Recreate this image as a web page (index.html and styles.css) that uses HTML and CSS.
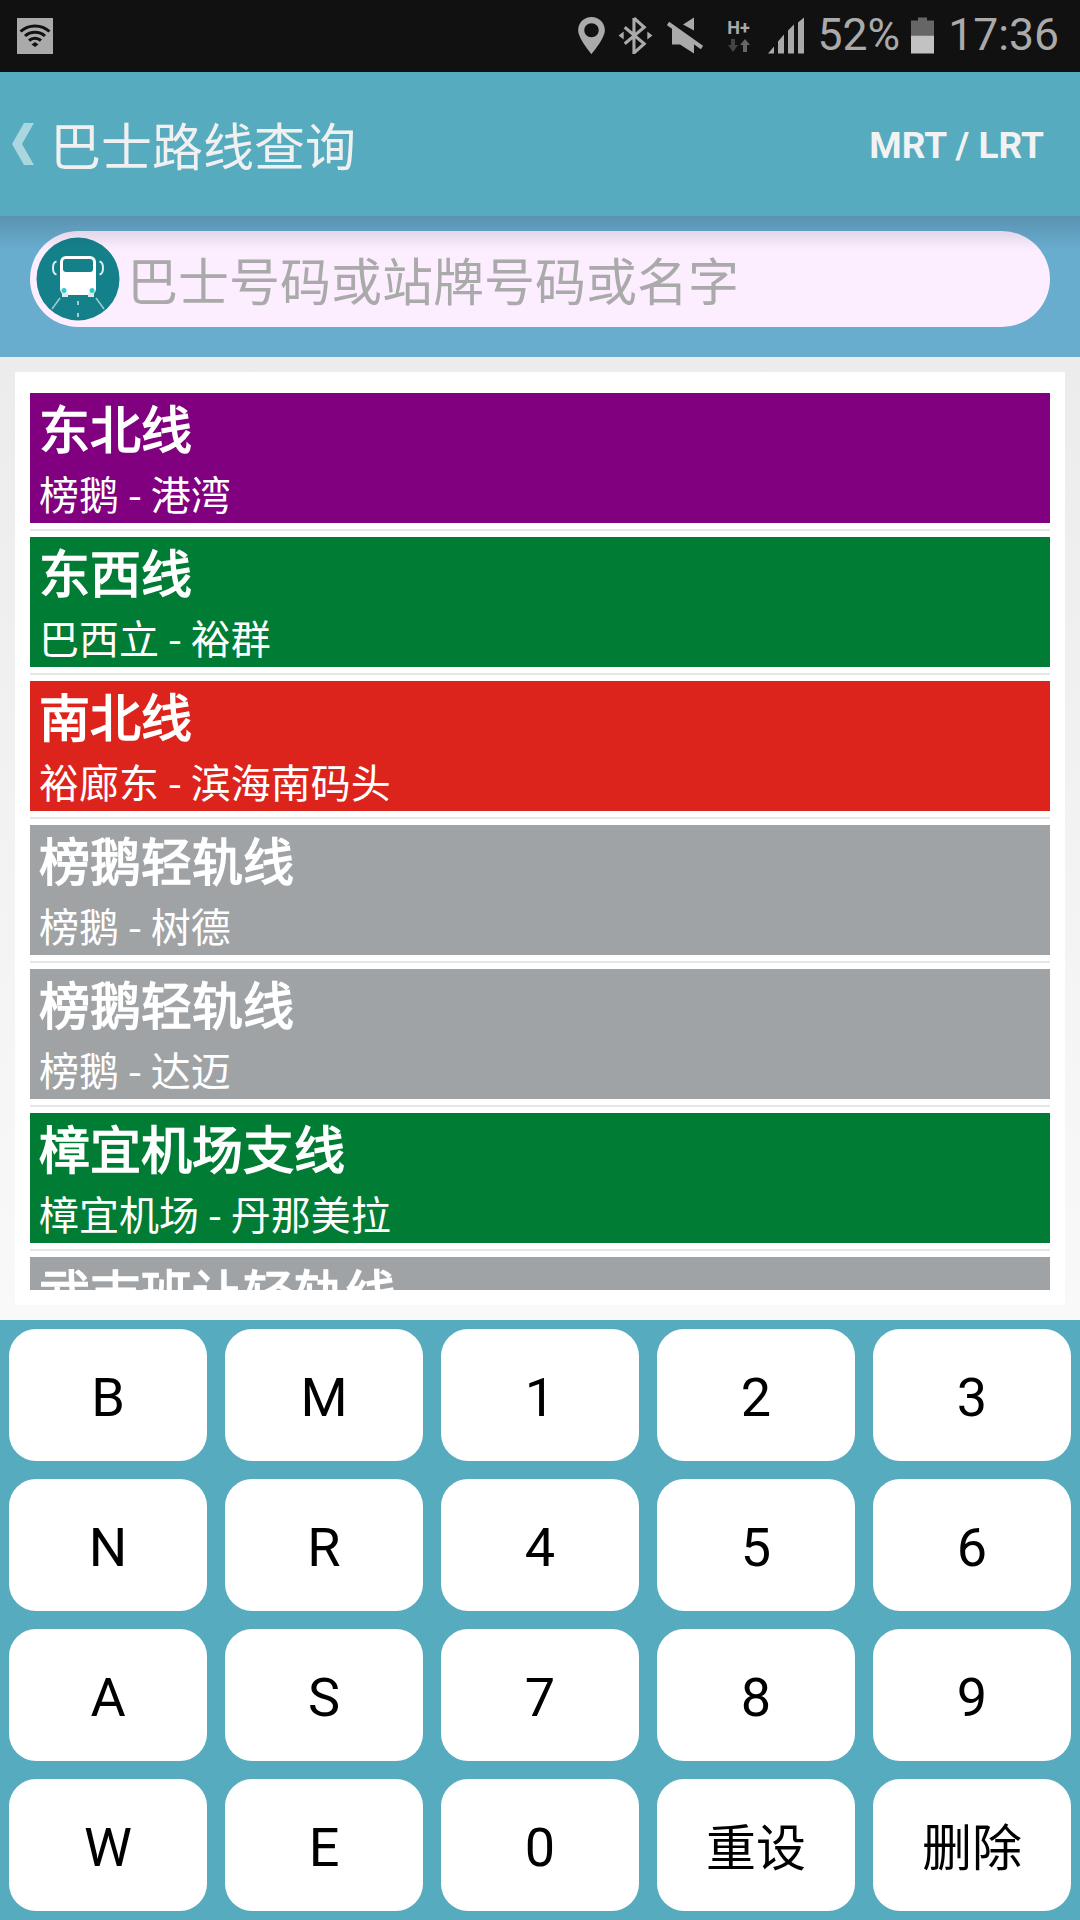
FILE: index.html
```html
<!DOCTYPE html>
<html lang="zh">
<head>
<meta charset="utf-8">
<title>巴士路线查询</title>
<link rel="stylesheet" href="styles.css">
</head>
<body>
<div class="app">
  <div class="status">
    <div class="wifi-box">
      <svg width="36" height="36" viewBox="0 0 35 36"><path d="M3 13.500C11 6 24 6 32 13.500" fill="none" stroke="#111" stroke-width="3"/><path d="M7.500 18C13 13 22 13 27.500 18" fill="none" stroke="#111" stroke-width="3"/><path d="M11.500 22.500C15 19.500 20 19.500 23.500 22.500" fill="none" stroke="#111" stroke-width="3"/><path d="M14 26.500L17.500 24L21 26.500L17.500 29Z" fill="#111"/></svg>
    </div>
    <div class="status-right">
      <svg class="st-loc" width="27" height="37" viewBox="0 0 26 36"><path fill-rule="evenodd" d="M13 0C5.800 0 0 5.700 0 12.800C0 21 13 36 13 36S26 21 26 12.800C26 5.700 20.200 0 13 0ZM13 6C17 6 20 9 20 12.800S17 19.600 13 19.600S6 16.600 6 12.800S9 6 13 6Z" fill="#aaa"/></svg>
      <svg class="st-bt" width="35" height="37" viewBox="0 0 33 36"><path d="M15 1V35L25 26L6 10M15 1L25 10L6 26" fill="none" stroke="#aaa" stroke-width="3"/><path d="M0 18L5 14V22Z M33 18L28 14V22Z" fill="#aaa"/></svg>
      <svg class="st-mute" width="36" height="37" viewBox="0 0 36 36"><path d="M27 0V13L16 7ZM5 10L27 26V36L13 27H5Z" fill="#aaa"/><path d="M1 6L35 30" stroke="#aaa" stroke-width="4"/></svg>
      <div class="st-net">
        <span class="st-hplus">H+</span>
        <svg width="22" height="14" viewBox="0 0 22 14"><path d="M3 0H7V6H10L5 13L0 6H3Z" fill="#444"/><path d="M15 13H19V6H22L17 0L12 6H15Z" fill="#666"/></svg>
      </div>
      <svg class="st-signal" width="36" height="37" viewBox="0 0 36 36"><path d="M0 36L6 29V36ZM10 36V24L16 17V36ZM20 36V13L26 7V36ZM30 36V5L36 0V36Z" fill="#aaa"/></svg>
      <span class="st-pct">52%</span>
      <svg class="st-bat" width="23" height="37" viewBox="0 0 23 36"><path d="M7 0H16V3H23V18H0V3H7Z" fill="#666"/><rect y="18" width="23" height="18" fill="#c2c2c2"/></svg>
      <span class="st-time">17:36</span>
    </div>
  </div>

  <header class="head">
    <div class="head-left">
      <svg class="back" width="22" height="42" viewBox="0 0 22 42"><path d="M12 0H22L10 21L22 42H12L0 21Z" fill="#a9d6df"/></svg>
      <span class="head-title">巴士路线查询</span>
    </div>
    <span class="head-action">MRT / LRT</span>
  </header>

  <div class="search-band">
    <div class="pill">
      <svg class="bus" width="84" height="84" viewBox="0 0 84 84">
        <circle cx="42" cy="42" r="41.500" fill="#14808a"/>
        <path d="M20.500 24.500C17.500 25 17 27 17 31S17.500 37 20.500 37.500M63.500 24.500C66.500 25 67 27 67 31S66.500 37 63.500 37.500" fill="none" stroke="#d8eef0" stroke-width="2"/>
        <rect x="24" y="19" width="36" height="39" rx="6" fill="#fff"/>
        <rect x="27" y="22" width="30" height="13" rx="3" fill="#14808a"/>
        <rect x="26" y="56" width="6" height="4" fill="#d8eef0"/>
        <rect x="52" y="56" width="6" height="4" fill="#d8eef0"/>
        <circle cx="28" cy="53.500" r="2.500" fill="#35c6d0"/>
        <circle cx="56" cy="53.500" r="2.500" fill="#35c6d0"/>
        <path d="M24 61L16 72M60 61L68 72" stroke="#9fcdd2" stroke-width="1.500"/>
        <path d="M41 64H43V68H41ZM41 76H43V80H41Z" fill="#9fcdd2"/>
      </svg>
      <span class="placeholder">巴士号码或站牌号码或名字</span>
    </div>
  </div>

  <main class="list-area">
    <div class="card">
      <div class="scroll">
        <div class="row"><div class="line line-purple"><div class="line-name">东北线</div><div class="line-route">榜鹅 - 港湾</div></div></div>
        <div class="row"><div class="line line-green"><div class="line-name">东西线</div><div class="line-route">巴西立 - 裕群</div></div></div>
        <div class="row"><div class="line line-red"><div class="line-name">南北线</div><div class="line-route">裕廊东 - 滨海南码头</div></div></div>
        <div class="row"><div class="line line-grey"><div class="line-name">榜鹅轻轨线</div><div class="line-route">榜鹅 - 树德</div></div></div>
        <div class="row"><div class="line line-grey"><div class="line-name">榜鹅轻轨线</div><div class="line-route">榜鹅 - 达迈</div></div></div>
        <div class="row"><div class="line line-green"><div class="line-name">樟宜机场支线</div><div class="line-route">樟宜机场 - 丹那美拉</div></div></div>
        <div class="row"><div class="line line-grey"><div class="line-name">武吉班让轻轨线</div></div></div>
      </div>
    </div>
  </main>

  <div class="keypad">
    <button class="key">B</button><button class="key">M</button><button class="key">1</button><button class="key">2</button><button class="key">3</button>
    <button class="key">N</button><button class="key">R</button><button class="key">4</button><button class="key">5</button><button class="key">6</button>
    <button class="key">A</button><button class="key">S</button><button class="key">7</button><button class="key">8</button><button class="key">9</button>
    <button class="key">W</button><button class="key">E</button><button class="key">0</button><button class="key key-cjk">重设</button><button class="key key-cjk">删除</button>
  </div>
</div>
</body>
</html>
```

FILE: styles.css
```css
* { box-sizing: border-box; }
html, body { margin: 0; padding: 0; }
body {
  width: 1080px;
  height: 1920px;
  overflow: hidden;
  font-family: Roboto, "Noto Sans CJK SC", sans-serif;
  background: #57abbf;
}
.app { display: flex; flex-direction: column; height: 1920px; }

.status {
  height: 72px;
  flex: none;
  background: #111;
  display: flex;
  align-items: center;
  justify-content: space-between;
  padding: 0 21px 1px 17px;
}
.wifi-box { width: 36px; height: 36px; background: #aaa; display: flex; }
.status-right { display: flex; align-items: center; height: 37px; color: #aaa; }
.st-bt { margin-left: 13px; }
.st-mute { margin-left: 14px; }
.st-net { margin-left: 23px; width: 26px; height: 37px; display: flex; flex-direction: column; align-items: center; }
.st-hplus { font-size: 18px; font-weight: 700; line-height: 22px; height: 22px; }
.st-signal { margin-left: 16px; }
.st-pct { margin-left: 14px; font-size: 44.500px; line-height: 37px; }
.st-bat { margin-left: 11px; }
.st-time { margin-left: 14px; font-size: 44.500px; line-height: 37px; }

.head {
  height: 144px;
  flex: none;
  background: #57abbf;
  display: flex;
  align-items: center;
  justify-content: space-between;
  padding: 0 36px 0 12px;
}
.head-left { display: flex; align-items: center; gap: 16px; }
.head-title { font-family: "Noto Sans CJK SC", sans-serif; font-size: 51px; line-height: 60px; color: #f0f0f0; }
.head-action { font-size: 37px; line-height: 48px; padding-top: 3px; font-weight: 700; color: #f2f2f2; }

.search-band {
  position: relative;
  height: 141px;
  flex: none;
  background: #68acce;
  padding: 15px 30px 30px 30px;
}
.search-band::after {
  content: "";
  position: absolute;
  left: 0;
  right: 0;
  top: 0;
  height: 34px;
  background: linear-gradient(rgba(50, 70, 90, .25), rgba(50, 70, 90, 0));
}
.pill {
  height: 96px;
  border-radius: 48px;
  background: #fdeeff;
  display: flex;
  align-items: center;
  padding-left: 6px;
  gap: 7px;
}
.bus { flex: none; }
.placeholder { font-family: "Noto Sans CJK SC", sans-serif; font-size: 51px; line-height: 60px; color: #aaa; }

.list-area {
  height: 963px;
  flex: none;
  background: linear-gradient(#ececec, #f9f9f9);
  padding: 15px;
}
.card { height: 933px; background: #fff; padding: 15px; }
.scroll { height: 903px; overflow: hidden; }
.row { padding: 6px 0; border-bottom: 2px solid #e6e6e6; }
.line {
  height: 130px;
  padding: 3px 9px 0;
  color: #fff;
  font-family: "Noto Sans CJK SC", sans-serif;
}
.line-name { font-size: 51px; line-height: 62px; font-weight: 400; -webkit-text-stroke: 1.500px #fff; }
.line-route { font-size: 40px; line-height: 58px; margin-top: 6px; }
.line-purple { background: #800080; }
.line-green { background: #007c34; }
.line-red { background: #dc241c; }
.line-grey { background: #a0a3a6; }

.keypad {
  height: 600px;
  flex: none;
  background: #57abbf;
  padding: 9px;
  display: grid;
  grid-template-columns: repeat(5, 198px);
  grid-auto-rows: 132px;
  gap: 18px;
}
.key {
  border: 0;
  padding: 4px 0 0;
  background: #fff;
  border-radius: 27px;
  color: #000;
  font-family: Roboto, "Noto Sans CJK SC", sans-serif;
  font-size: 54px;
  display: flex;
  align-items: center;
  justify-content: center;
}
.key-cjk { font-size: 50px; padding: 0 0 2px; }
```
